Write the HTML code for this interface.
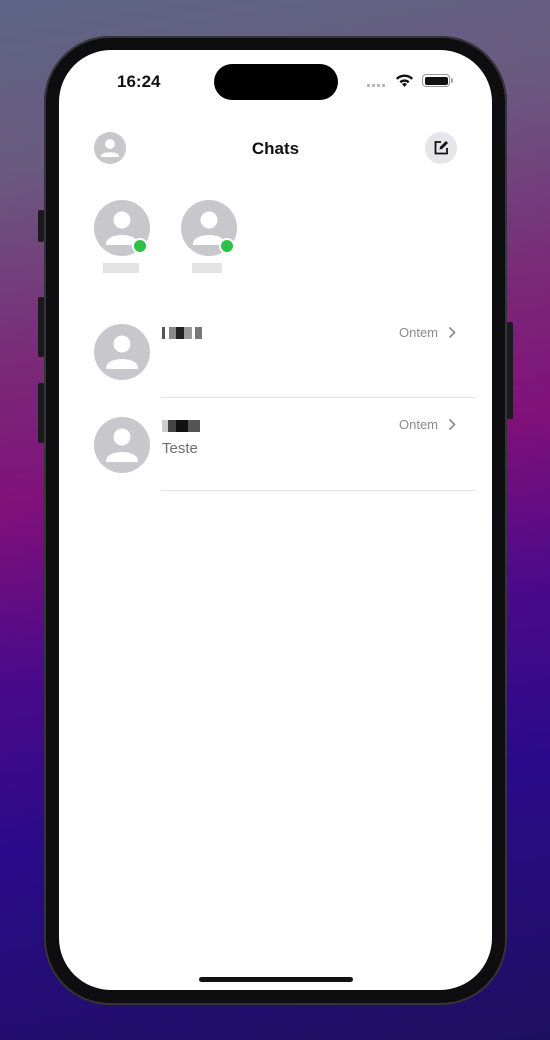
<!DOCTYPE html>
<html><head><meta charset="utf-8"><style>
*{margin:0;padding:0;box-sizing:border-box}
body{width:550px;height:1040px;overflow:hidden;position:relative;font-family:"Liberation Sans",sans-serif;
background:linear-gradient(170deg,#5d6585 0%,#6a5a80 15%,#7a2a78 32%,#80107a 45%,#4a0a8a 60%,#2a0a8a 75%,#1e1060 100%);}
.frame{position:absolute;left:44px;top:36px;width:463px;height:969px;border-radius:66px;background:#0e0e10;box-shadow:0 0 0 2px #34343a inset}
.btn{position:absolute;background:#1a1a1c;width:6px;border-radius:2px}
.screen{position:absolute;left:59px;top:50px;width:433px;height:940px;border-radius:52px;background:#fff;overflow:hidden}
.island{position:absolute;left:155px;top:14px;width:124px;height:36px;border-radius:18px;background:#000}
.time{position:absolute;left:58px;top:22px;font-weight:bold;font-size:17px;color:#111}
.sep{position:absolute;left:102px;right:17px;height:1px;background:#e3e3e6}
.small{position:absolute;font-size:13px;color:#8a8a8e}
.home{position:absolute;left:140px;top:927px;width:154px;height:5px;border-radius:3px;background:#111}
</style></head><body>
<div class="btn" style="left:38px;top:210px;height:32px"></div>
<div class="btn" style="left:38px;top:297px;height:60px"></div>
<div class="btn" style="left:38px;top:383px;height:60px"></div>
<div class="btn" style="left:507px;top:322px;height:97px"></div>
<div class="frame"></div>
<div class="screen">
<div class="island"></div>
<div class="time">16:24</div>
<div style="position:absolute;left:308px;top:34px;width:20px;height:3px;background:repeating-linear-gradient(90deg,#bbb 0 3px,transparent 3px 5px)"></div>
<svg style="position:absolute;left:336px;top:23px" width="19" height="15" viewBox="0 0 19 15"><path d="M9.5 14l2.5-3a4 4 0 0 0-5 0z M4.5 8.5a7 7 0 0 1 10 0l-1.6 1.8a4.6 4.6 0 0 0-6.8 0z M1 5a12 12 0 0 1 17 0l-1.6 1.8a9.6 9.6 0 0 0-13.8 0z" fill="#111"/></svg>
<div style="position:absolute;left:363px;top:24px;width:28px;height:13px;border:1px solid #999;border-radius:4px;padding:1.5px"><div style="background:#111;width:100%;height:100%;border-radius:2px"></div></div>
<div style="position:absolute;left:392px;top:28px;width:2px;height:5px;background:#aaa;border-radius:1px"></div>

<svg style="position:absolute;left:35px;top:82px" width="32" height="32" viewBox="0 0 32 32"><circle cx="16" cy="16" r="16" fill="#c7c7cc"/><circle cx="16" cy="12" r="5" fill="#fff"/><path d="M7 24c0-5 18-5 18 0v1H7z" fill="#fff"/></svg>
<div style="position:absolute;left:0;width:433px;top:89px;text-align:center;font-weight:bold;font-size:17px;color:#111">Chats</div>
<div style="position:absolute;left:366px;top:82px;width:32px;height:32px;border-radius:50%;background:#e5e5ea"></div>
<svg style="position:absolute;left:373px;top:89px" width="18" height="18" viewBox="0 0 18 18"><path d="M9 3H3.5v11.5H15V9" fill="none" stroke="#111" stroke-width="1.8"/><path d="M7.5 10.5l.5-2.5 6-6 2 2-6 6z" fill="#111"/></svg>

<svg style="position:absolute;left:35px;top:150px" width="56" height="56" viewBox="0 0 56 56"><circle cx="28" cy="28" r="28" fill="#c7c7cc"/><circle cx="28" cy="20" r="8.5" fill="#fff"/><path d="M12 44c0-12 32-12 32 0v1H12z" fill="#fff"/><circle cx="46" cy="46" r="8" fill="#fff"/><circle cx="46" cy="46" r="6" fill="#2fc046"/></svg>
<svg style="position:absolute;left:122px;top:150px" width="56" height="56" viewBox="0 0 56 56"><circle cx="28" cy="28" r="28" fill="#c7c7cc"/><circle cx="28" cy="20" r="8.5" fill="#fff"/><path d="M12 44c0-12 32-12 32 0v1H12z" fill="#fff"/><circle cx="46" cy="46" r="8" fill="#fff"/><circle cx="46" cy="46" r="6" fill="#2fc046"/></svg>
<div style="position:absolute;left:44px;top:213px;width:36px;height:10px;background:#dcdcdc;opacity:.8"></div>
<div style="position:absolute;left:133px;top:213px;width:30px;height:10px;background:#dcdcdc;opacity:.8"></div>

<svg style="position:absolute;left:35px;top:274px" width="56" height="56" viewBox="0 0 56 56"><circle cx="28" cy="28" r="28" fill="#c7c7cc"/><circle cx="28" cy="20" r="8.5" fill="#fff"/><path d="M12 44c0-12 32-12 32 0v1H12z" fill="#fff"/></svg>
<div style="position:absolute;left:103px;top:277px;width:40px;height:12px;background:linear-gradient(90deg,#555 0 3px,#fff 3px 7px,#888 7px 14px,#222 14px 22px,#999 22px 30px,#fff 30px 33px,#777 33px 40px)"></div>
<div class="small" style="left:340px;top:275px">Ontem</div>
<svg style="position:absolute;left:389px;top:276px" width="8" height="13" viewBox="0 0 8 13"><path d="M1.5 1.5l5 5-5 5" fill="none" stroke="#8a8a8e" stroke-width="1.6"/></svg>
<div class="sep" style="top:347px"></div>

<svg style="position:absolute;left:35px;top:367px" width="56" height="56" viewBox="0 0 56 56"><circle cx="28" cy="28" r="28" fill="#c7c7cc"/><circle cx="28" cy="20" r="8.5" fill="#fff"/><path d="M12 44c0-12 32-12 32 0v1H12z" fill="#fff"/></svg>
<div style="position:absolute;left:103px;top:370px;width:38px;height:12px;background:linear-gradient(90deg,#ccc 0 6px,#444 6px 14px,#111 14px 26px,#555 26px 38px)"></div>
<div style="position:absolute;left:103px;top:390px;font-size:15px;color:#6e6e73">Teste</div>
<div class="small" style="left:340px;top:367px">Ontem</div>
<svg style="position:absolute;left:389px;top:368px" width="8" height="13" viewBox="0 0 8 13"><path d="M1.5 1.5l5 5-5 5" fill="none" stroke="#8a8a8e" stroke-width="1.6"/></svg>
<div class="sep" style="top:440px"></div>
<div class="home"></div>
</div>
</body></html>
